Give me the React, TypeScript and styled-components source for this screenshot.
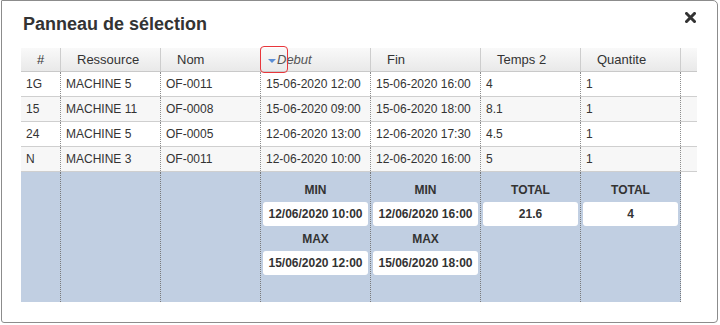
import styled, { createGlobalStyle } from 'styled-components';

const GlobalStyle = createGlobalStyle`
  body {
    margin: 0;
    background: #fff;
    font-family: 'Liberation Sans', Arial, sans-serif;
    color: #333;
  }
`;

const COLS = '40px 100px 100px 110px 110px 100px 100px 16px';

type Row = { id: string; ressource: string; nom: string; debut: string; fin: string; temps: string; quantite: string };

const rows: Row[] = [
  { id: '1G', ressource: 'MACHINE 5', nom: 'OF-0011', debut: '15-06-2020 12:00', fin: '15-06-2020 16:00', temps: '4', quantite: '1' },
  { id: '15', ressource: 'MACHINE 11', nom: 'OF-0008', debut: '15-06-2020 09:00', fin: '15-06-2020 18:00', temps: '8.1', quantite: '1' },
  { id: '24', ressource: 'MACHINE 5', nom: 'OF-0005', debut: '12-06-2020 13:00', fin: '12-06-2020 17:30', temps: '4.5', quantite: '1' },
  { id: 'N', ressource: 'MACHINE 3', nom: 'OF-0011', debut: '12-06-2020 10:00', fin: '12-06-2020 16:00', temps: '5', quantite: '1' },
];

const headers = ['#', 'Ressource', 'Nom', 'Debut', 'Fin', 'Temps 2', 'Quantite'];

const App = () => (
  <>
    <GlobalStyle />
    <Dialog>
      <TitleBar>
        <Title>Panneau de sélection</Title>
        <CloseButton aria-label="Fermer">
          <svg width="11" height="11" viewBox="0 0 11 11">
            <path d="M1.5 1.5 L9.5 9.5 M9.5 1.5 L1.5 9.5" stroke="#333" strokeWidth="3" strokeLinecap="square" />
          </svg>
        </CloseButton>
      </TitleBar>
      <Grid>
        <HeaderRow>
          {headers.map((h) =>
            h === 'Debut' ? (
              <HeaderCell key={h} $sorted>
                <SortArrow />
                <em>Debut</em>
                <Highlight />
              </HeaderCell>
            ) : (
              <HeaderCell key={h}>{h}</HeaderCell>
            )
          )}
          <HeaderFiller />
        </HeaderRow>
        {rows.map((r, i) => (
          <BodyRow key={r.id} $alt={i % 2 === 1}>
            <Cell>{r.id}</Cell>
            <Cell>{r.ressource}</Cell>
            <Cell>{r.nom}</Cell>
            <Cell>{r.debut}</Cell>
            <Cell>{r.fin}</Cell>
            <Cell>{r.temps}</Cell>
            <Cell>{r.quantite}</Cell>
            <div />
          </BodyRow>
        ))}
        <FooterRow>
          <FooterCell />
          <FooterCell />
          <FooterCell />
          <FooterCell>
            <StatLabel>MIN</StatLabel>
            <StatBox>12/06/2020 10:00</StatBox>
            <StatLabel>MAX</StatLabel>
            <StatBox>15/06/2020 12:00</StatBox>
          </FooterCell>
          <FooterCell>
            <StatLabel>MIN</StatLabel>
            <StatBox>12/06/2020 16:00</StatBox>
            <StatLabel>MAX</StatLabel>
            <StatBox>15/06/2020 18:00</StatBox>
          </FooterCell>
          <FooterCell>
            <StatLabel>TOTAL</StatLabel>
            <StatBox>21.6</StatBox>
          </FooterCell>
          <FooterCell>
            <StatLabel>TOTAL</StatLabel>
            <StatBox>4</StatBox>
          </FooterCell>
          <div />
        </FooterRow>
      </Grid>
    </Dialog>
  </>
);

const Dialog = styled.div`
  box-sizing: border-box;
  width: 717px;
  height: 323px;
  margin-left: 1px;
  padding: 0 20px 20px 19px;
  border: 1px solid #8c8c8c;
  border-radius: 1px 5px 4px 3px;
  background: #fff;
`;

const TitleBar = styled.div`
  display: flex;
  justify-content: space-between;
  align-items: flex-start;
  height: 47px;
`;

const Title = styled.h2`
  margin: 11px 0 0 2px;
  font-size: 18px;
  line-height: 24px;
  font-weight: bold;
  color: #333;
`;

const CloseButton = styled.button`
  display: flex;
  margin: 11px 1px 0 0;
  padding: 0;
  border: 0;
  background: none;
  cursor: pointer;
`;

const Grid = styled.div`
  width: 676px;
  font-size: 12px;
`;

const HeaderRow = styled.div`
  display: grid;
  grid-template-columns: ${COLS};
  height: 24px;
  box-sizing: border-box;
  border-bottom: 1px solid #c9c9c9;
  background: linear-gradient(#f9f9f9, #e9e9e9);
`;

const HeaderCell = styled.div<{ $sorted?: boolean }>`
  position: relative;
  display: flex;
  align-items: center;
  padding-left: ${({ $sorted }) => ($sorted ? '7px' : '16px')};
  border-right: 1px solid #cdcdcd;
  font-size: 13px;
  color: #333;
  em {
    font-style: italic;
    color: #555;
  }
`;

const HeaderFiller = styled.div``;

const SortArrow = styled.span`
  width: 0;
  height: 0;
  margin: 2px 1px 0 0;
  border-left: 4px solid transparent;
  border-right: 4px solid transparent;
  border-top: 4px solid #5b8ed6;
`;

const Highlight = styled.span`
  position: absolute;
  left: -1px;
  top: -2px;
  width: 28px;
  height: 27px;
  box-sizing: border-box;
  border: 1.5px solid #e8363b;
  border-radius: 4px;
  pointer-events: none;
`;

const BodyRow = styled.div<{ $alt: boolean }>`
  display: grid;
  grid-template-columns: ${COLS};
  height: 25px;
  box-sizing: border-box;
  border-bottom: 1px solid #cfcfcf;
  background: ${({ $alt }) => ($alt ? '#f7f7f7' : '#fff')};
`;

const Cell = styled.div`
  display: flex;
  align-items: center;
  padding-left: 5px;
  border-right: 1px dotted #8d8d8d;
  white-space: nowrap;
  overflow: hidden;
  color: #333;
`;

const FooterRow = styled.div`
  display: grid;
  grid-template-columns: ${COLS};
  height: 130px;
`;

const FooterCell = styled.div`
  box-sizing: border-box;
  padding: 8px 2px 0 2px;
  border-right: 1px dotted #7a7a7a;
  background: #c1cfe2;
`;

const StatLabel = styled.div`
  margin-bottom: 2px;
  line-height: 20px;
  text-align: center;
  font-weight: bold;
  color: #333;
`;

const StatBox = styled.div`
  height: 24px;
  margin-bottom: 3px;
  line-height: 24px;
  border-radius: 3px;
  background: #fff;
  text-align: center;
  font-weight: bold;
  color: #333;
`;

export default App;
